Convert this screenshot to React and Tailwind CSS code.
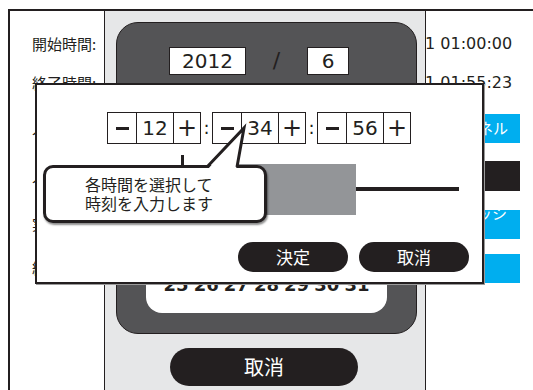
import React from "react";

const JP = "font-['Noto_Sans_CJK_JP','Noto_Sans',sans-serif]";
const NUM = "font-['DejaVu_Sans',sans-serif]";

function Spinner({ value }) {
  return (
    <div className="flex h-[32px]">
      <div className="w-[29px] h-full border-y border-l border-[#231f20] flex items-center justify-center">
        <div className="w-[13px] h-[3px] bg-[#231f20]" />
      </div>
      <div className={`w-[37px] h-full border-y border-l border-[#231f20] flex items-center justify-center text-[20px] leading-none text-[#231f20] ${NUM}`}>
        {value}
      </div>
      <div className={`w-[28px] h-full border border-[#231f20] flex items-center justify-center text-[24px] leading-none text-[#231f20] ${NUM}`}>
        +
      </div>
    </div>
  );
}

function Colon() {
  return (
    <div className={`w-[11px] h-[32px] flex items-center justify-center text-[18px] leading-none text-[#231f20] ${NUM}`}>:</div>
  );
}

const lastRow = ["25", "26", "27", "28", "29", "30", "31"];

export default function App() {
  return (
    <div className="relative w-[533px] h-[390px] overflow-hidden bg-white text-[#231f20]">
      {/* base page */}
      <div className="pl-[8px] pt-[9px]">
        <div className="w-[560px] h-[420px] border-2 border-[#231f20] flex flex-col pt-[21px]">
          <div className="grid grid-cols-[333px_1fr] h-[22px] items-center">
            <div className={`pl-[22px] text-[15px] ${JP}`}>開始時間:</div>
            <div className={`text-[16px] whitespace-nowrap ${NUM}`}>2012/06/01 01:00:00</div>
          </div>
          <div className="grid grid-cols-[333px_1fr] h-[22px] items-center mt-[17px]">
            <div className={`pl-[22px] text-[15px] ${JP}`}>終了時間:</div>
            <div className={`text-[16px] whitespace-nowrap ${NUM}`}>2012/06/01 01:55:23</div>
          </div>
          <div className="grid grid-cols-[333px_1fr] h-[29px] items-center mt-[21px]">
            <div className={`pl-[22px] text-[15px] ${JP}`}>人数:</div>
            <div className="pl-[89px]">
              <div className={`w-[88px] h-[29px] bg-[#00aeef] flex items-center justify-end pr-[12px] text-white text-[15px] ${JP}`}>チャンネル</div>
            </div>
          </div>
          <div className="grid grid-cols-[333px_1fr] h-[30px] items-center mt-[18px]">
            <div className={`pl-[22px] text-[15px] ${JP}`}>人物:</div>
            <div className="pl-[89px]">
              <div className="w-[88px] h-[30px] bg-[#231f20]" />
            </div>
          </div>
          <div className="grid grid-cols-[333px_1fr] h-[29px] items-center mt-[19px]">
            <div className={`pl-[22px] text-[15px] ${JP}`}>実行:</div>
            <div className="pl-[89px]">
              <div className={`w-[88px] h-[29px] bg-[#00aeef] flex items-center justify-end pr-[12px] text-white text-[15px] ${JP}`}>リフレッシュ</div>
            </div>
          </div>
          <div className="grid grid-cols-[333px_1fr] h-[29px] items-center mt-[15px]">
            <div className={`pl-[22px] text-[15px] ${JP}`}>終了:</div>
            <div className="pl-[89px]">
              <div className="w-[88px] h-[29px] bg-[#00aeef]" />
            </div>
          </div>
        </div>
      </div>

      {/* date picker overlay */}
      <div className="absolute left-[104px] top-[11px] w-[322px] h-[400px] bg-[#e6e7e8] border-x border-[#231f20] flex flex-col">
        <div className="ml-[11px] mt-[11px] w-[301px] h-[312px] bg-[#545456] border border-[#231f20] rounded-[22px] flex flex-col">
          <div className="flex items-center pt-[24px] pl-[52px]">
            <div className={`w-[77px] h-[28px] bg-white border border-[#231f20] flex items-center justify-center text-[20px] leading-none ${NUM}`}>2012</div>
            <div className={`w-[61px] flex justify-center text-[22px] leading-none text-[#231f20] ${NUM}`}>/</div>
            <div className={`w-[42px] h-[28px] bg-white border border-[#231f20] flex items-center justify-center text-[20px] leading-none ${NUM}`}>6</div>
          </div>
          <div className="ml-[29px] mt-[14px] mb-[20px] w-[241px] flex-1 bg-white rounded-[16px] flex flex-col justify-end px-[15px] pb-[16px]">
            <div className="grid grid-cols-7 h-[24px] items-center">
              {lastRow.map((d, j) => (
                <div key={j} className={`text-center text-[18px] font-bold leading-none ${NUM}`}>{d}</div>
              ))}
            </div>
          </div>
        </div>
        <div className={`ml-[65px] mt-[14px] w-[188px] h-[38px] rounded-full bg-[#231f20] text-white flex items-center justify-center text-[20px] ${JP}`}>取消</div>
      </div>

      {/* time modal */}
      <div className="absolute left-[35px] top-[83px] w-[449px] h-[201px] bg-white border-2 border-[#231f20] shadow-[1px_1px_0_#9a9a9a] flex flex-col">
        <div className="flex pt-[27px] pl-[70px]">
          <Spinner value="12" />
          <Colon />
          <Spinner value="34" />
          <Colon />
          <Spinner value="56" />
        </div>
        <div className="flex items-center h-[68px] mt-[11px] pl-[144px]">
          <div className="w-[3px] h-full bg-[#231f20]" />
          <div className="w-[46px] h-[4px] bg-[#231f20]" />
          <div className="w-[126px] h-[51px] bg-[#939598]" />
          <div className="w-[103px] h-[4px] bg-[#231f20]" />
        </div>
        <div className="flex justify-end gap-[11px] pr-[13px] mt-[19px]">
          <div className={`w-[110px] h-[30px] rounded-full bg-[#231f20] text-white flex items-center justify-center text-[17px] ${JP}`}>決定</div>
          <div className={`w-[110px] h-[30px] rounded-full bg-[#231f20] text-white flex items-center justify-center text-[17px] ${JP}`}>取消</div>
        </div>

        {/* callout */}
        <div className="absolute left-[6px] top-[80px] w-[224px] h-[58px] bg-white border-[3px] border-[#231f20] rounded-[10px] shadow-[1px_2px_2px_rgba(0,0,0,0.45)] flex items-center pl-[39px]">
          <p className={`text-[16px] leading-[19px] ${JP}`}>
            各時間を選択して
            <br />
            時刻を入力します
          </p>
        </div>
        <svg className="absolute left-[160px] top-[38px]" width="60" height="50" viewBox="0 0 60 50">
          <polygon points="11,46 47,5 39,46" fill="white" />
          <polyline points="10,44 47,5 40,44" fill="none" stroke="#231f20" strokeWidth="3" strokeLinejoin="miter" />
        </svg>
      </div>
    </div>
  );
}
